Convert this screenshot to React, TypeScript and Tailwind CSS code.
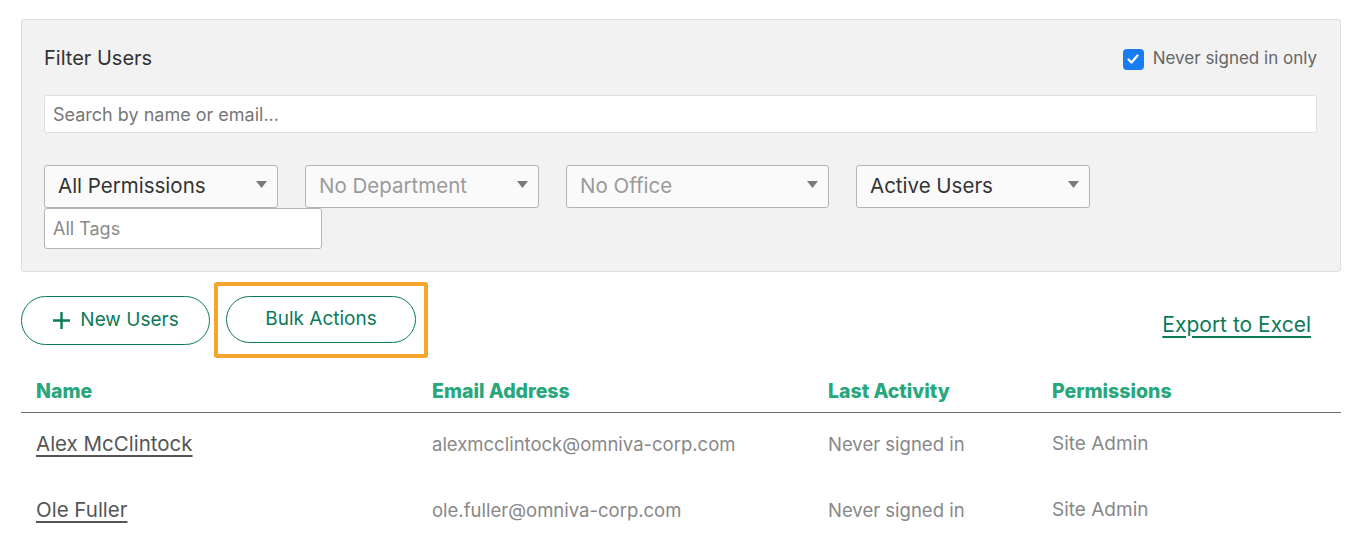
import React from 'react';

const users = [
  { name: 'Alex McClintock', email: 'alexmcclintock@omniva-corp.com', activity: 'Never signed in', permission: 'Site Admin' },
  { name: 'Ole Fuller', email: 'ole.fuller@omniva-corp.com', activity: 'Never signed in', permission: 'Site Admin' },
];

function Caret() {
  return (
    <svg width="11" height="7" viewBox="0 0 11 7" className="absolute right-[10px] top-[15px]">
      <path d="M0 0 L11 0 L5.5 7 Z" fill="#7a7a7a" />
    </svg>
  );
}

function Select({ label, width, disabled }: { label: string; width: string; disabled?: boolean }) {
  return (
    <div
      className={`relative h-[43px] ${width} rounded-[3px] border border-[#b5b5b5] bg-[#fafafa] pl-[13px] flex items-center text-[20.5px] ${
        disabled ? 'text-[#9a9a9a]' : 'text-[#333]'
      }`}
    >
      {label}
      <Caret />
    </div>
  );
}

export default function App() {
  return (
    <div className="min-h-screen bg-white pl-[21px] pr-[18px] pt-[19px] text-[#333]" style={{ fontFamily: 'Inter, "Noto Sans", sans-serif' }}>
      {/* Filter panel */}
      <div className="rounded-[3px] border border-[#dedede] bg-[#f2f2f2] pl-[22px] pr-[23px] pt-[25px] pb-[22px]">
        <div className="flex items-center justify-between">
          <h2 className="text-[20px] leading-[26px] text-[#333]">Filter Users</h2>
          <label className="flex items-center gap-[9px] translate-y-[1px] text-[17px] text-[#666]">
            <span className="w-[21px] h-[21px] rounded-[4px] bg-[#1a7cf5] flex items-center justify-center">
              <svg width="14" height="14" viewBox="0 0 14 14">
                <path d="M2.5 7.5 L5.5 10.5 L11.5 3.5" fill="none" stroke="white" strokeWidth="2.2" strokeLinecap="round" strokeLinejoin="round" />
              </svg>
            </span>
            Never signed in only
          </label>
        </div>

        <div className="mt-[24px] h-[38px] rounded-[3px] border border-[#e0e0e0] bg-white pl-[8px] flex items-center text-[18px] text-[#777]">
          Search by name or email...
        </div>

        <div className="mt-[32px] flex flex-wrap gap-x-[27px]">
          <Select label="All Permissions" width="w-[234px]" />
          <Select label="No Department" width="w-[234px]" disabled />
          <Select label="No Office" width="w-[263px]" disabled />
          <Select label="Active Users" width="w-[234px]" />
          <div className="h-[41px] w-[278px] rounded-[3px] border border-[#b5b5b5] bg-white pl-[8px] flex items-center text-[18px] text-[#8a8a8a]">
            All Tags
          </div>
        </div>
      </div>

      {/* Actions */}
      <div className="mt-[10px] flex items-center">
        <button className="h-[49px] w-[189px] rounded-full border border-[#0b7a58] flex items-center justify-center gap-[9px] text-[19px] text-[#0b7a58]">
          <svg width="19" height="19" viewBox="0 0 19 19">
            <path d="M9.5 1 V18 M1 9.5 H18" stroke="#0b7a58" strokeWidth="2.4" />
          </svg>
          New Users
        </button>
        <div className="ml-[4px] rounded-[3px] border-[4px] border-[#f5a52c] px-[8px] pt-[10px] pb-[11px]">
          <button className="h-[47px] w-[190px] rounded-full border border-[#0b7a58] text-[19px] text-[#0b7a58]">
            Bulk Actions
          </button>
        </div>
        <a className="ml-auto mr-[30px] mt-[9px] text-[21px] text-[#0b7a58] underline underline-offset-[4px] decoration-[1.5px]">
          Export to Excel
        </a>
      </div>

      {/* Table */}
      <div className="mt-[13px]">
        <div className="grid grid-cols-[396px_396px_224px_1fr] h-[42px] items-center pt-[1px] border-b border-[#6b6b6b] text-[19.5px] font-extrabold text-[#28a67c]">
          <div className="pl-[15px]">Name</div>
          <div className="pl-[15px]">Email Address</div>
          <div className="pl-[15px]">Last Activity</div>
          <div className="pl-[15px]">Permissions</div>
        </div>
        {users.map((u) => (
          <div key={u.email} className="grid grid-cols-[396px_396px_224px_1fr] h-[66px] items-center pb-[3px]">
            <div className="pl-[15px] text-[20.5px] text-[#555] underline underline-offset-[4px]">{u.name}</div>
            <div className="pl-[15px] text-[18.5px] text-[#888]">{u.email}</div>
            <div className="pl-[15px] text-[18.5px] text-[#888]">{u.activity}</div>
            <div className="pl-[15px] text-[19px] text-[#888]">{u.permission}</div>
          </div>
        ))}
      </div>
    </div>
  );
}
